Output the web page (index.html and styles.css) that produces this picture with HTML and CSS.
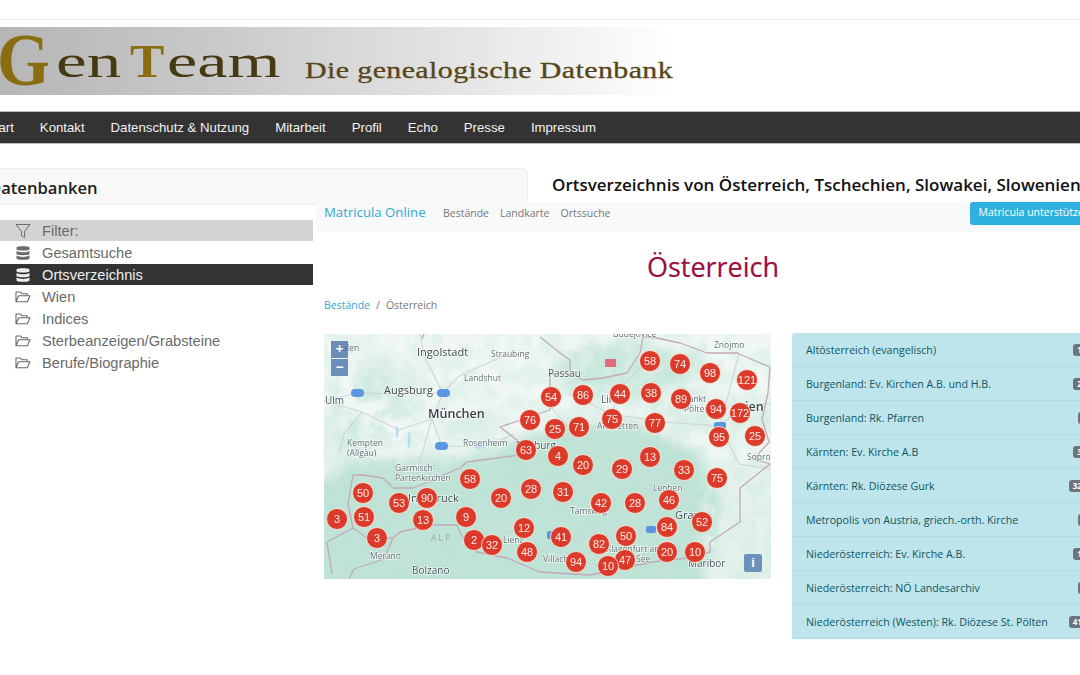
FILE: index.html
```html
<!DOCTYPE html>
<html lang="de">
<head>
    <meta charset="UTF-8">
    <meta name="viewport" content="width=device-width, initial-scale=1.0">
    <title>GenTeam - Ortsverzeichnis</title>
    <link rel="stylesheet" href="styles.css">
</head>
<body>
    <svg class="icon-defs" width="0" height="0">
        <symbol id="ic-filter" viewBox="0 0 16 16">
            <path d="M1 1.500h14L9.600 8.300v6.200l-3.200-2V8.300z" fill="none" stroke="currentColor" stroke-width="1"/>
        </symbol>
        <symbol id="ic-db" viewBox="0 0 16 16">
            <path d="M1.500 2.600C1.500 .8 14.500 .8 14.500 2.600v1.600C14.500 6 1.500 6 1.500 4.200z M1.500 5.900c2.700 1.700 10.300 1.700 13 0v3c0 1.700-13 1.700-13 0z M1.500 10.600c2.700 1.700 10.300 1.700 13 0v2.800c0 1.800-13 1.800-13 0z" fill="currentColor"/>
        </symbol>
        <symbol id="ic-folder" viewBox="0 0 16 16">
            <path d="M1 12.800V3h4.500l1.300 1.700h5.400v2M1 12.800l2.700-6.100H15l-2.600 6.100z" fill="none" stroke="currentColor" stroke-width="1.100" stroke-linejoin="round"/>
        </symbol>
    </svg>

    <div class="topline"></div>

    <div class="logo">
        <span class="logo-part logo-g">G</span>
        <span class="logo-part logo-en">en</span>
        <span class="logo-part logo-t">T</span>
        <span class="logo-part logo-eam">eam</span>
        <span class="logo-claim">Die genealogische Datenbank</span>
    </div>

    <nav class="mainnav">
        <a class="first">Start</a>
        <a>Kontakt</a>
        <a>Datenschutz &amp; Nutzung</a>
        <a>Mitarbeit</a>
        <a>Profil</a>
        <a>Echo</a>
        <a>Presse</a>
        <a>Impressum</a>
    </nav>

    <div class="title-row">
        <div class="panel-head">Datenbanken</div>
        <div class="page-title">Ortsverzeichnis von Österreich, Tschechien, Slowakei, Slowenien</div>
    </div>

    <div class="content">
        <aside class="sidebar">
            <div class="side-item filter"><svg class="side-icon"><use href="#ic-filter"/></svg>Filter:</div>
            <div class="side-item"><svg class="side-icon"><use href="#ic-db"/></svg>Gesamtsuche</div>
            <div class="side-item active"><svg class="side-icon"><use href="#ic-db"/></svg>Ortsverzeichnis</div>
            <div class="side-item"><svg class="side-icon"><use href="#ic-folder"/></svg>Wien</div>
            <div class="side-item"><svg class="side-icon"><use href="#ic-folder"/></svg>Indices</div>
            <div class="side-item"><svg class="side-icon"><use href="#ic-folder"/></svg>Sterbeanzeigen/Grabsteine</div>
            <div class="side-item"><svg class="side-icon"><use href="#ic-folder"/></svg>Berufe/Biographie</div>
        </aside>

        <main class="matricula">
            <div class="mat-nav">
                <span class="mat-brand">Matricula Online</span>
                <span class="mat-links"><a>Bestände</a><a>Landkarte</a><a>Ortssuche</a></span>
                <span class="mat-btn">Matricula unterstützen</span>
            </div>

            <h1 class="mat-title">Österreich</h1>

            <div class="crumbs"><a>Bestände</a><span class="sep">/</span>Österreich</div>

            <div class="mat-row">
                <div class="map">
                    <svg class="map-svg" viewBox="0 0 447 245" width="447" height="245">
                        <defs>
                            <filter id="soft" x="-20%" y="-20%" width="140%" height="140%"><feGaussianBlur stdDeviation="7"/></filter>
                            <filter id="mottle" x="0" y="0" width="100%" height="100%">
                                <feTurbulence type="fractalNoise" baseFrequency="0.06" numOctaves="4" seed="7"/>
                                <feColorMatrix values="0 0 0 0 .50  0 0 0 0 .77  0 0 0 0 .67  0 0 0 3.600 -1.300"/>
                            </filter>
                            <mask id="alps-mask">
                                <rect width="447" height="245" fill="#444"/>
                                <path d="M-30 165 40 128 130 132 190 112 250 92 310 95 370 120 395 165 370 280 -30 280z" fill="#fff" filter="url(#soft)"/>
                                <path d="M225 20 300 5 385 25 345 60 260 55z M0 60 60 40 100 90 30 110z" fill="#888" filter="url(#soft)"/>
                            </mask>
                        </defs>
                        <rect width="447" height="245" fill="#f1f7f4"/>
                        <g filter="url(#soft)">
                            <path d="M-30 160 40 125 130 128 190 108 250 88 310 90 375 118 405 165 385 280 -30 280z" fill="#c2e3d7"/>
                            <path d="M225 25 290 8 385 22 345 60 270 62 240 60z" fill="#d5ede3"/>
                            <path d="M300 62 400 60 470 70 470 100 340 95z" fill="#e3f2eb"/>
                            <path d="M40 20 110 40 90 70 30 60z M130 85 180 75 170 100 120 105z M-20 80 50 90 40 130 -20 120z" fill="#e1f1ea"/>
                            <path d="M380 130 470 120 470 280 380 280z" fill="#e6f3ed"/>
                        </g>
                        <rect width="447" height="245" filter="url(#mottle)" mask="url(#alps-mask)"/>
                        <g class="roads">
                            <path d="M0 67 34 59 80 60 119 59 135 42 180 22 M119 59 100 22 96 0 M108 85 119 59 M108 85 75 96 38 78 0 67 M108 85 118 112 160 113 190 100 M38 78 20 100 15 120 M108 85 95 130"/>
                            <path d="M246 60 287 80 340 88 396 92 420 70 447 70 M396 92 415 20 M396 92 415 130 447 135 M360 150 350 190 340 225 M330 196 250 205 190 228 M287 80 300 50 335 15 M226 72 250 100"/>
                        </g>
                        <g class="border">
                            <path d="M216 3 236 19 246 26 246 39 259 46 279 44 303 39 316 19 319 3 333 4 356 9 383 19 413 19 429 26 446 33 444 59 438 85 445 108 430 125 446 130 416 154 416 188 386 208 386 218 363 224 329 228 266 241 216 238 183 224 153 218 139 204 133 191 106 191 76 198 69 204 43 204 29 194 3 208 M29 194 24 170 29 141 39 141 59 144 69 154 89 154 106 147 136 134 143 128 196 121 193 106 176 93 226 76 226 40 246 39"/>
                            <path d="M3 208 8 240 M69 204 60 225 30 235 25 245 M100 0 98 5"/>
                        </g>
                        <g class="water">
                            <ellipse cx="73" cy="98" rx="1.500" ry="6"/>
                            <ellipse cx="85" cy="106" rx="1.500" ry="8"/>
                            <ellipse cx="156" cy="112" rx="6" ry="3"/>
                        </g>
                        <g class="road-tag">
                            <rect x="27" y="55" width="13" height="8" rx="4"/>
                            <rect x="113" y="55" width="13" height="8" rx="4"/>
                            <rect x="111" y="108" width="13" height="8" rx="4"/>
                            <rect x="390" y="88" width="12" height="7" rx="2"/>
                            <rect x="322" y="192" width="10" height="7" rx="2"/>
                            <rect x="223" y="197" width="6" height="8" rx="2"/>
                            <rect class="tag-red" x="281" y="25" width="11" height="8" rx="1"/>
                        </g>
                        <g class="place">
                            <text x="13" y="17" class="sm">Aalen</text>
                            <text x="289" y="3" class="sm">Budějovice</text>
                            <text x="93" y="22" class="lg">Ingolstadt</text>
                            <text x="167" y="23" class="sm">Straubing</text>
                            <text x="140" y="47" class="sm">Landshut</text>
                            <text x="60" y="60" class="lg">Augsburg</text>
                            <text x="1" y="70" class="md">Ulm</text>
                            <text x="104" y="84" class="xl">München</text>
                            <text x="23" y="112" class="sm">Kempten</text>
                            <text x="23" y="122" class="sm">(Allgäu)</text>
                            <text x="139" y="112" class="sm">Rosenheim</text>
                            <text x="192" y="115" class="md">Salzburg</text>
                            <text x="224" y="43" class="md">Passau</text>
                            <text x="390" y="14" class="sm">Znojmo</text>
                            <text x="277" y="69" class="md">Linz</text>
                            <text x="360" y="68" class="sm">Sankt</text>
                            <text x="360" y="78" class="sm">Pölten</text>
                            <text x="421" y="77" class="xl">ien</text>
                            <text x="273" y="95" class="sm">Amstetten</text>
                            <text x="423" y="126" class="sm">Sopron</text>
                            <text x="71" y="137" class="sm">Garmisch-</text>
                            <text x="71" y="147" class="sm">Partenkirchen</text>
                            <text x="84" y="168" class="lg">Innsbruck</text>
                            <text x="107" y="207" class="sm alps">A L P</text>
                            <text x="46" y="225" class="sm">Merano</text>
                            <text x="88" y="240" class="md">Bolzano</text>
                            <text x="179" y="209" class="sm">Lienz</text>
                            <text x="219" y="228" class="sm">Villach</text>
                            <text x="246" y="180" class="sm">Tamsweg</text>
                            <text x="329" y="157" class="sm">Leoben</text>
                            <text x="351" y="185" class="lg">Graz</text>
                            <text x="282" y="218" class="sm">Klagenfurt am</text>
                            <text x="312" y="228" class="sm">See</text>
                            <text x="364" y="233" class="md">Maribor</text>
                        </g>
                        <g class="cluster">
                            <g><circle cx="326" cy="27" r="10.500"/><text x="326" y="31">58</text></g>
                            <g><circle cx="356" cy="30" r="10.500"/><text x="356" y="34">74</text></g>
                            <g><circle cx="386" cy="39" r="10.500"/><text x="386" y="43">98</text></g>
                            <g><circle cx="423" cy="46" r="10.500"/><text x="423" y="50">121</text></g>
                            <g><circle cx="227" cy="63" r="10.500"/><text x="227" y="67">54</text></g>
                            <g><circle cx="259" cy="61" r="10.500"/><text x="259" y="65">86</text></g>
                            <g><circle cx="296" cy="60" r="10.500"/><text x="296" y="64">44</text></g>
                            <g><circle cx="327" cy="59" r="10.500"/><text x="327" y="63">38</text></g>
                            <g><circle cx="357" cy="65" r="10.500"/><text x="357" y="69">89</text></g>
                            <g><circle cx="392" cy="75" r="10.500"/><text x="392" y="79">94</text></g>
                            <g><circle cx="416" cy="79" r="10.500"/><text x="416" y="83">172</text></g>
                            <g><circle cx="206" cy="86" r="10.500"/><text x="206" y="90">76</text></g>
                            <g><circle cx="231" cy="95" r="10.500"/><text x="231" y="99">25</text></g>
                            <g><circle cx="255" cy="93" r="10.500"/><text x="255" y="97">71</text></g>
                            <g><circle cx="288" cy="85" r="10.500"/><text x="288" y="89">75</text></g>
                            <g><circle cx="331" cy="89" r="10.500"/><text x="331" y="93">77</text></g>
                            <g><circle cx="395" cy="103" r="10.500"/><text x="395" y="107">95</text></g>
                            <g><circle cx="431" cy="102" r="10.500"/><text x="431" y="106">25</text></g>
                            <g><circle cx="202" cy="116" r="10.500"/><text x="202" y="120">63</text></g>
                            <g><circle cx="234" cy="122" r="10.500"/><text x="234" y="126">4</text></g>
                            <g><circle cx="326" cy="123" r="10.500"/><text x="326" y="127">13</text></g>
                            <g><circle cx="259" cy="131" r="10.500"/><text x="259" y="135">20</text></g>
                            <g><circle cx="298" cy="135" r="10.500"/><text x="298" y="139">29</text></g>
                            <g><circle cx="360" cy="136" r="10.500"/><text x="360" y="140">33</text></g>
                            <g><circle cx="393" cy="144" r="10.500"/><text x="393" y="148">75</text></g>
                            <g><circle cx="146" cy="145" r="10.500"/><text x="146" y="149">58</text></g>
                            <g><circle cx="39" cy="159" r="10.500"/><text x="39" y="163">50</text></g>
                            <g><circle cx="103" cy="164" r="10.500"/><text x="103" y="168">90</text></g>
                            <g><circle cx="75" cy="169" r="10.500"/><text x="75" y="173">53</text></g>
                            <g><circle cx="177" cy="164" r="10.500"/><text x="177" y="168">20</text></g>
                            <g><circle cx="207" cy="155" r="10.500"/><text x="207" y="159">28</text></g>
                            <g><circle cx="239" cy="158" r="10.500"/><text x="239" y="162">31</text></g>
                            <g><circle cx="277" cy="169" r="10.500"/><text x="277" y="173">42</text></g>
                            <g><circle cx="311" cy="169" r="10.500"/><text x="311" y="173">28</text></g>
                            <g><circle cx="345" cy="166" r="10.500"/><text x="345" y="170">46</text></g>
                            <g><circle cx="13" cy="185" r="10.500"/><text x="13" y="189">3</text></g>
                            <g><circle cx="40" cy="183" r="10.500"/><text x="40" y="187">51</text></g>
                            <g><circle cx="99" cy="186" r="10.500"/><text x="99" y="190">13</text></g>
                            <g><circle cx="142" cy="183" r="10.500"/><text x="142" y="187">9</text></g>
                            <g><circle cx="378" cy="188" r="10.500"/><text x="378" y="192">52</text></g>
                            <g><circle cx="343" cy="193" r="10.500"/><text x="343" y="197">84</text></g>
                            <g><circle cx="200" cy="194" r="10.500"/><text x="200" y="198">12</text></g>
                            <g><circle cx="237" cy="203" r="10.500"/><text x="237" y="207">41</text></g>
                            <g><circle cx="302" cy="202" r="10.500"/><text x="302" y="206">50</text></g>
                            <g><circle cx="53" cy="204" r="10.500"/><text x="53" y="208">3</text></g>
                            <g><circle cx="150" cy="206" r="10.500"/><text x="150" y="210">2</text></g>
                            <g><circle cx="168" cy="211" r="10.500"/><text x="168" y="215">32</text></g>
                            <g><circle cx="275" cy="210" r="10.500"/><text x="275" y="214">82</text></g>
                            <g><circle cx="203" cy="218" r="10.500"/><text x="203" y="222">48</text></g>
                            <g><circle cx="343" cy="218" r="10.500"/><text x="343" y="222">20</text></g>
                            <g><circle cx="371" cy="218" r="10.500"/><text x="371" y="222">10</text></g>
                            <g><circle cx="301" cy="226" r="10.500"/><text x="301" y="230">47</text></g>
                            <g><circle cx="252" cy="228" r="10.500"/><text x="252" y="232">94</text></g>
                            <g><circle cx="284" cy="232" r="10.500"/><text x="284" y="236">10</text></g>
                        </g>
                    </svg>
                    <div class="zoom-ctl">
                        <span class="zoom-btn">+</span>
                        <span class="zoom-btn">−</span>
                    </div>
                    <span class="map-info">i</span>
                </div>

                <ul class="regions">
                    <li>Altösterreich (evangelisch)<span class="badge">112</span></li>
                    <li>Burgenland: Ev. Kirchen A.B. und H.B.<span class="badge">215</span></li>
                    <li>Burgenland: Rk. Pfarren<span class="badge">96</span></li>
                    <li>Kärnten: Ev. Kirche A.B<span class="badge">310</span></li>
                    <li>Kärnten: Rk. Diözese Gurk<span class="badge">3240</span></li>
                    <li>Metropolis von Austria, griech.-orth. Kirche<span class="badge">12</span></li>
                    <li>Niederösterreich: Ev. Kirche A.B.<span class="badge">104</span></li>
                    <li>Niederösterreich: NÖ Landesarchiv<span class="badge">58</span></li>
                    <li>Niederösterreich (Westen): Rk. Diözese St. Pölten<span class="badge">4120</span></li>
                </ul>
            </div>
        </main>
    </div>
</body>
</html>
```

FILE: styles.css
```css
* {
    margin: 0;
    padding: 0;
    box-sizing: border-box;
}

html, body {
    height: 675px;
    overflow: hidden;
}

body {
    width: 1080px;
    background: #fff;
    font-family: "Liberation Sans", Arial, sans-serif;
}

.icon-defs {
    display: block;
    height: 0;
}

.topline {
    height: 1px;
    margin-top: 19px;
    background: #f3f3f3;
}

/* logo: the letters are stretched sideways like the original banner */
.logo {
    display: flex;
    align-items: baseline;
    width: 675px;
    height: 68px;
    margin-top: 7px;
    padding-top: 2px;
    overflow: hidden;
    background: linear-gradient(90deg, #b6b6b6 0%, #c8c8c8 30%, #e2e2e2 65%, #fff 100%);
    font-family: "Liberation Serif", "Times New Roman", serif;
    color: #463a12;
}

.logo-part {
    display: block;
    flex: none;
    font-size: 46px;
    line-height: 46px;
    transform-origin: left bottom;
}

.logo-g {
    width: 59px;
    margin-left: -3px;
    font-size: 74px;
    font-weight: bold;
    color: #8a6d10;
    transform: translateY(8px) scaleX(.92);
}

.logo-en {
    width: 74px;
    transform: scaleX(1.500);
}

.logo-t {
    width: 37px;
    color: #8a6d10;
    font-weight: bold;
    transform: scaleX(1.120);
}

.logo-eam {
    width: 138px;
    transform: scaleX(1.480);
}

.logo-claim {
    flex: none;
    font-size: 22.500px;
    letter-spacing: .3px;
    color: #57461a;
    -webkit-text-stroke: 0.3px #57461a;
    transform: translateY(1px) scaleX(1.330);
    transform-origin: left bottom;
    white-space: nowrap;
}

/* main nav */
.mainnav {
    display: flex;
    gap: 26px;
    align-items: center;
    height: 33px;
    margin-top: 16px;
    background: #333;
    border-top: 1px solid #bbb;
    border-bottom: 1px solid #bbb;
    font-size: 13.200px;
    color: #f2f2f2;
}

.mainnav .first {
    margin-left: -14px;
}

/* title row */
.title-row {
    display: flex;
    height: 37px;
    margin-top: 24px;
}

.panel-head {
    flex: none;
    width: 540px;
    margin-left: -12px;
    padding-top: 7px;
    background: #f8f8f8;
    border: 1px solid #eee;
    border-radius: 4px;
    font-family: "Open Sans", sans-serif;
    font-size: 16.600px;
    font-weight: 600;
    color: #222;
}

.page-title {
    margin-left: 24px;
    padding-top: 5px;
    font-family: "Open Sans", sans-serif;
    font-size: 17px;
    font-weight: 600;
    color: #111;
    white-space: nowrap;
}

.content {
    display: flex;
    margin-top: -3px;
}

/* left list */
.sidebar {
    flex: 0 0 313px;
    margin-top: 3px;
    padding-top: 15px;
    background: #fff;
}

.side-item {
    display: flex;
    align-items: center;
    height: 21px;
    margin-bottom: 1px;
    padding-left: 15px;
    font-size: 14.650px;
    color: #6a6a6a;
}

.side-item.filter {
    background: #d3d3d3;
}

.side-item.active {
    background: #333;
    color: #eee;
}

.side-icon {
    width: 16px;
    height: 16px;
    margin-right: 11px;
}

/* matricula frame */
.matricula {
    flex: 0 0 794px;
    margin-left: 3px;
    font-family: "Open Sans", sans-serif;
    background: #fff;
}

.mat-nav {
    display: flex;
    align-items: flex-start;
    height: 30px;
    padding-left: 8px;
    background: #f8f9fa;
}

.mat-brand {
    width: 119px;
    padding-top: 1px;
    font-size: 13.200px;
    color: #35a8cf;
}

.mat-links {
    display: flex;
    gap: 11px;
    padding-top: 4px;
    font-size: 10.500px;
    color: #777;
}

.mat-btn {
    margin-left: 359px;
    width: 130px;
    height: 23px;
    padding: 3px 9px;
    background: #2fb1e0;
    border-radius: 3px;
    font-size: 10.500px;
    color: #fff;
    white-space: nowrap;
}

.mat-title {
    margin-top: 16px;
    text-align: center;
    font-size: 27px;
    font-weight: 400;
    line-height: 38px;
    color: #9b0d3f;
    -webkit-text-stroke: 0.2px #9b0d3f;
}

.crumbs {
    margin-top: 12px;
    padding-left: 8px;
    font-size: 10.500px;
    line-height: 15px;
    color: #777;
}

.crumbs a {
    color: #35a8cf;
}

.crumbs .sep {
    padding: 0 6px;
}

.mat-row {
    display: flex;
    gap: 21px;
    margin-top: 21px;
    padding-left: 8px;
}

/* map */
.map {
    position: relative;
    flex: 0 0 447px;
    height: 245px;
    overflow: hidden;
}

.map-svg {
    display: block;
    filter: blur(0.3px);
}

.roads path {
    fill: none;
    stroke: #ccd5d8;
    stroke-width: 1.100;
}

.border path {
    fill: none;
    stroke: #c2a8ba;
    stroke-width: 1.300;
    stroke-linejoin: round;
}

.water ellipse {
    fill: #b8def2;
}

.road-tag rect {
    fill: #5a97e0;
}

.road-tag .tag-red {
    fill: #e2687c;
}

.place text {
    fill: #4c565f;
    font-family: "Open Sans", sans-serif;
    paint-order: stroke;
    stroke: rgba(255, 255, 255, 0.7);
    stroke-width: 1.500px;
}

.place .sm {
    font-size: 8.500px;
    fill: #646f78;
}

.place .md {
    font-size: 10px;
}

.place .lg {
    font-size: 11px;
    fill: #3f4851;
}

.place .xl {
    font-size: 12.500px;
    font-weight: 600;
    fill: #3a424a;
}

.place .alps {
    fill: #93aeb0;
    stroke: none;
}

.cluster circle {
    fill: #dc3a2a;
    stroke: rgba(255, 240, 225, 0.8);
    stroke-width: 1;
}

.cluster text {
    fill: #fbeee8;
    font-family: "Liberation Sans", sans-serif;
    font-size: 11px;
    text-anchor: middle;
}

.zoom-ctl {
    position: absolute;
    left: 7px;
    top: 7px;
    display: flex;
    flex-direction: column;
    gap: 1px;
}

.zoom-btn {
    width: 17px;
    height: 17px;
    background: rgba(62, 108, 168, 0.75);
    text-align: center;
    font-size: 14px;
    font-weight: bold;
    line-height: 16px;
    color: #fff;
}

.map-info {
    position: absolute;
    left: 420px;
    top: 220px;
    width: 18px;
    height: 18px;
    background: #6c92bb;
    border-radius: 2px;
    text-align: center;
    font-family: "Liberation Sans", sans-serif;
    font-size: 13px;
    font-weight: bold;
    line-height: 18px;
    color: #fff;
}

/* region list */
.regions {
    flex: 0 0 308px;
    list-style: none;
    margin-top: -1px;
    height: 307px;
    overflow: hidden;
    border-radius: 3px;
}

.regions li {
    display: flex;
    justify-content: space-between;
    align-items: center;
    height: 34px;
    padding: 1px 0 0 14px;
    background: #bee5eb;
    border-bottom: 1px solid #abdde5;
    font-size: 10.650px;
    color: #0f5662;
    white-space: nowrap;
}

.badge {
    margin-right: 5px;
    padding: 2px 4px;
    background: #6c757d;
    border-radius: 3px;
    font-size: 8px;
    line-height: 8px;
    font-weight: 700;
    color: #fff;
}
```
